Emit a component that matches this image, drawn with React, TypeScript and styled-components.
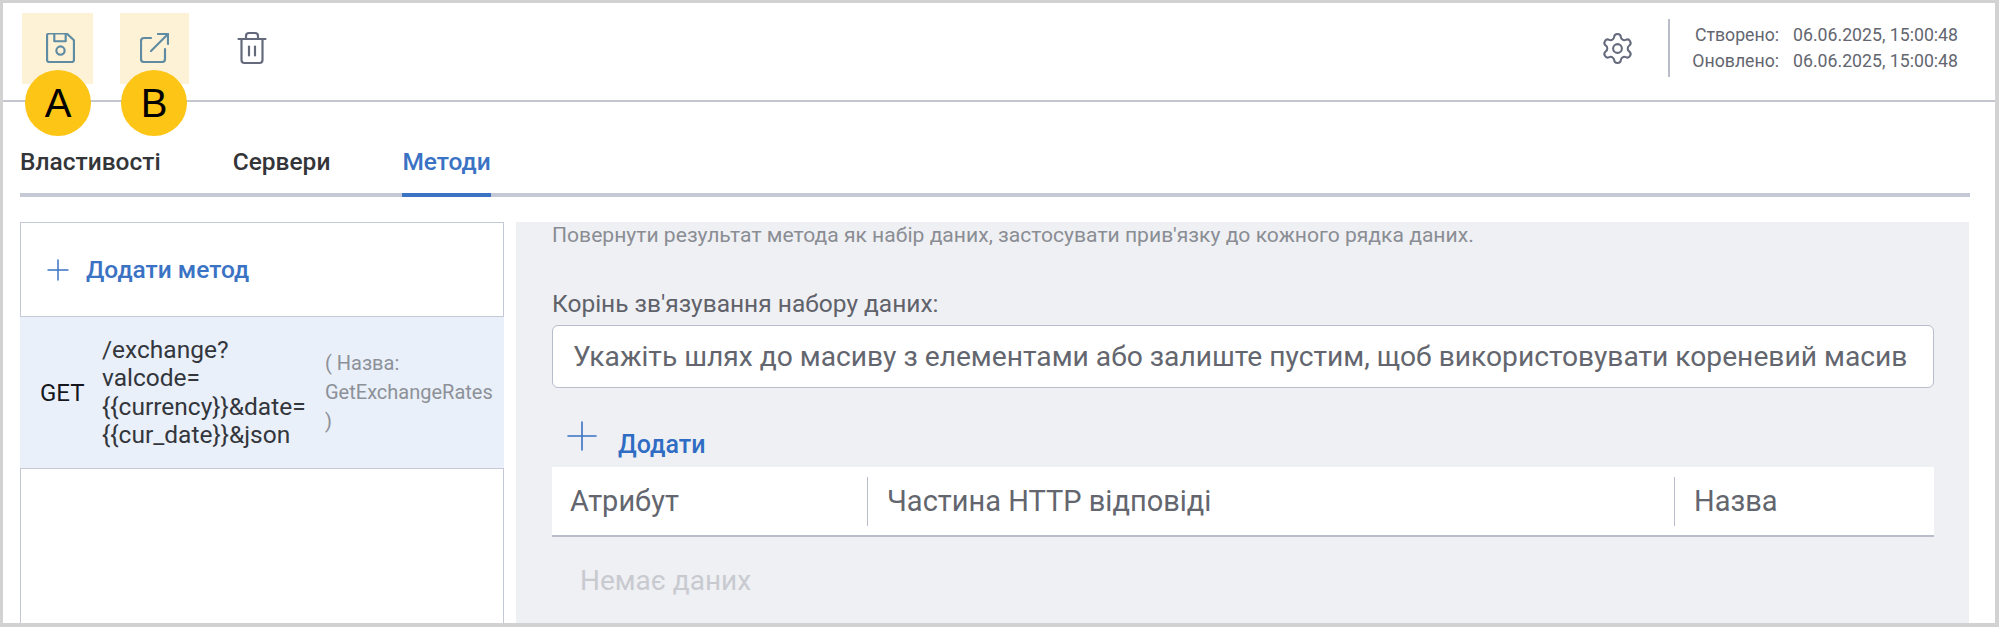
import React from 'react';
import styled, { createGlobalStyle } from 'styled-components';
import { Plus, Settings, Trash2 } from 'lucide-react';

const GlobalStyle = createGlobalStyle`
    html, body {
        margin: 0;
        background: #fff;
    }
    * {
        box-sizing: border-box;
    }
`;

const App = () => {
    return (
        <>
            <GlobalStyle />
            <Frame>
                <Toolbar>
                    <ToolGroup>
                        <ToolButton $marked $width={71} $shift={6}>
                            <SaveIcon />
                        </ToolButton>
                        <ToolButton $marked $width={69}>
                            <ExportIcon />
                        </ToolButton>
                        <ToolButton $width={71}>
                            <Trash2 size={36} strokeWidth={1.45} />
                        </ToolButton>
                    </ToolGroup>
                    <ToolbarRight>
                        <Settings size={35} strokeWidth={1.4} color='#646a7c' />
                        <Divider />
                        <Dates>
                            <span>Створено:</span>
                            <span>06.06.2025, 15:00:48</span>
                            <span>Оновлено:</span>
                            <span>06.06.2025, 15:00:48</span>
                        </Dates>
                    </ToolbarRight>
                </Toolbar>
                <Badge $left={22}>A</Badge>
                <Badge $left={118}>B</Badge>
                <Tabs>
                    <Tab>Властивості</Tab>
                    <Tab>Сервери</Tab>
                    <Tab $active>Методи</Tab>
                </Tabs>
                <Content>
                    <MethodsPanel>
                        <AddMethod>
                            <Plus size={34} strokeWidth={1.05} color='#3a72c4' />
                            <span>Додати метод</span>
                        </AddMethod>
                        <MethodRow>
                            <Verb>GET</Verb>
                            <MethodPath>
                                /exchange?<br />
                                valcode=<br />
                                {'{{currency}}'}&amp;date=<br />
                                {'{{cur_date}}'}&amp;json
                            </MethodPath>
                            <MethodName>( Назва: GetExchangeRates )</MethodName>
                        </MethodRow>
                    </MethodsPanel>
                    <Details>
                        <Hint>Повернути результат метода як набір даних, застосувати прив'язку до кожного рядка даних.</Hint>
                        <FieldLabel>Корінь зв'язування набору даних:</FieldLabel>
                        <FieldInput>Укажіть шлях до масиву з елементами або залиште пустим, щоб використовувати кореневий масив</FieldInput>
                        <AddRow>
                            <Plus size={48} strokeWidth={0.8} color='#3a72c4' />
                            <span>Додати</span>
                        </AddRow>
                        <TableHead>
                            <HeadCell>Атрибут</HeadCell>
                            <HeadCell $divided>Частина HTTP відповіді</HeadCell>
                            <HeadCell $divided>Назва</HeadCell>
                        </TableHead>
                        <EmptyText>Немає даних</EmptyText>
                    </Details>
                </Content>
            </Frame>
        </>
    );
};

export default App;

const SaveIcon = () => (
    <svg width='29' height='30' viewBox='3 2 28 29' fill='none' stroke='currentColor' strokeWidth='2.1' strokeLinejoin='round'>
        <path d='M4 4.5A2 2 0 0 1 6 2.5H23L30 9V28A2 2 0 0 1 28 30H6A2 2 0 0 1 4 28Z' />
        <path d='M11 3V10H22V3' />
        <circle cx='17' cy='19' r='4' />
    </svg>
);

const ExportIcon = () => (
    <svg width='29' height='30' viewBox='2 1 29 30' fill='none' stroke='currentColor' strokeWidth='2.2' strokeLinecap='round' strokeLinejoin='round'>
        <path d='M13 6H6A3 3 0 0 0 3 9V27A3 3 0 0 0 6 30H24A3 3 0 0 0 27 27V17' />
        <path d='M13 19L30 2' />
        <path d='M20 2H30V12' />
    </svg>
);

const Frame = styled.div`
    position: relative;
    height: 627px;
    overflow: hidden;
    border: solid #d2d2d2;
    border-width: 3px 4px 4px 3px;
    background: #fff;
    font-family: Roboto, 'Liberation Sans', sans-serif;
`;

const Toolbar = styled.header`
    display: flex;
    align-items: center;
    justify-content: space-between;
    height: 99px;
    padding: 9px 37px 16px 19px;
    border-bottom: 2px solid #c3c6cd;
`;

const ToolGroup = styled.div`
    display: flex;
    gap: 27px;
`;

const ToolButton = styled.div<{ $marked?: boolean; $width: number; $shift?: number }>`
    display: flex;
    align-items: center;
    justify-content: center;
    width: ${p => p.$width}px;
    height: 71px;
    padding-left: ${p => p.$shift || 0}px;
    color: ${p => (p.$marked ? '#5f8ba3' : '#646a7c')};
    background: ${p => (p.$marked ? '#fdf2d6' : 'transparent')};
`;

const ToolbarRight = styled.div`
    display: flex;
    align-items: center;
`;

const Divider = styled.div`
    width: 2px;
    height: 58px;
    margin: 0 22px 0 33px;
    background: #b9bdc9;
`;

const Dates = styled.div`
    display: grid;
    grid-template-columns: auto auto;
    column-gap: 14px;
    row-gap: 5px;
    font-size: 17.7px;
    line-height: 21px;
    color: #63666f;
    span:nth-child(odd) {
        text-align: right;
    }
`;

const Badge = styled.div<{ $left: number }>`
    position: absolute;
    top: 67px;
    left: ${p => p.$left}px;
    display: flex;
    align-items: center;
    justify-content: center;
    width: 66px;
    height: 66px;
    border-radius: 50%;
    background: #fdc516;
    color: #000;
    font-family: 'Liberation Sans', sans-serif;
    font-size: 40px;
`;

const Tabs = styled.nav`
    display: flex;
    gap: 72px;
    height: 95px;
    margin: 0 25px 0 17px;
    padding-top: 46px;
    border-bottom: 4px solid #c5c9d6;
`;

const Tab = styled.div<{ $active?: boolean }>`
    height: 49px;
    font-size: 24.5px;
    line-height: 28px;
    font-weight: 500;
    color: ${p => (p.$active ? '#3a72c4' : '#333539')};
    border-bottom: 4px solid ${p => (p.$active ? '#3a72c4' : 'transparent')};
`;

const Content = styled.main`
    display: flex;
    gap: 12px;
    height: 420px;
    margin-top: 25px;
    padding: 0 26px 0 17px;
`;

const MethodsPanel = styled.aside`
    flex: 0 0 484px;
    border: 1px solid #c5c9d6;
    border-bottom: 0;
`;

const AddMethod = styled.div`
    display: flex;
    align-items: center;
    gap: 11px;
    height: 93px;
    padding-left: 20px;
    font-size: 24.5px;
    font-weight: 500;
    color: #3a72c4;
`;

const MethodRow = styled.div`
    display: flex;
    align-items: center;
    height: 153px;
    padding-left: 19px;
    background: #e9f0f9;
    border-top: 1px solid #c5c9d6;
    border-bottom: 1px solid #c5c9d6;
    margin: 0 -1px 0 -1px;
    padding-right: 1px;
`;

const Verb = styled.div`
    flex: 0 0 63px;
    padding-left: 1px;
    font-size: 24px;
    color: #15171c;
`;

const MethodPath = styled.div`
    flex: 0 0 223px;
    font-size: 24.5px;
    line-height: 28.5px;
    color: #33363c;
`;

const MethodName = styled.div`
    width: 170px;
    font-size: 20px;
    line-height: 29px;
    color: #8d9098;
`;

const Details = styled.section`
    flex: 1;
    padding: 3px 35px 0 36px;
    background: #eff0f3;
`;

const Hint = styled.div`
    font-size: 21.1px;
    line-height: 20px;
    white-space: nowrap;
    color: #8a8d94;
`;

const FieldLabel = styled.div`
    margin-top: 47px;
    font-size: 24.5px;
    line-height: 24px;
    color: #5f626a;
`;

const FieldInput = styled.div`
    display: flex;
    align-items: center;
    height: 63px;
    margin-top: 9px;
    padding-left: 20px;
    background: #fff;
    border: 1px solid #b8bccb;
    border-radius: 6px;
    font-size: 28.2px;
    white-space: nowrap;
    color: #63666e;
`;

const AddRow = styled.div`
    display: flex;
    align-items: flex-start;
    gap: 12px;
    height: 45px;
    margin-top: 34px;
    padding-left: 6px;
    color: #2f6cc4;
    font-size: 25px;
    font-weight: 500;
    svg {
        margin-top: -10px;
    }
    span {
        margin-top: 8px;
        line-height: 30px;
    }
`;

const TableHead = styled.div`
    display: grid;
    grid-template-columns: 315px 807px 1fr;
    align-items: center;
    height: 70px;
    background: #fff;
    border-bottom: 2px solid #b8bccb;
`;

const HeadCell = styled.div<{ $divided?: boolean }>`
    display: flex;
    align-items: center;
    height: 49px;
    padding-left: ${p => (p.$divided ? 19 : 18)}px;
    font-size: 29px;
    color: #63666e;
    border-left: ${p => (p.$divided ? '1px solid #b8bccb' : '0')};
`;

const EmptyText = styled.div`
    margin-top: 29px;
    padding-left: 28px;
    font-size: 28px;
    line-height: 30px;
    color: #c8cad0;
`;
